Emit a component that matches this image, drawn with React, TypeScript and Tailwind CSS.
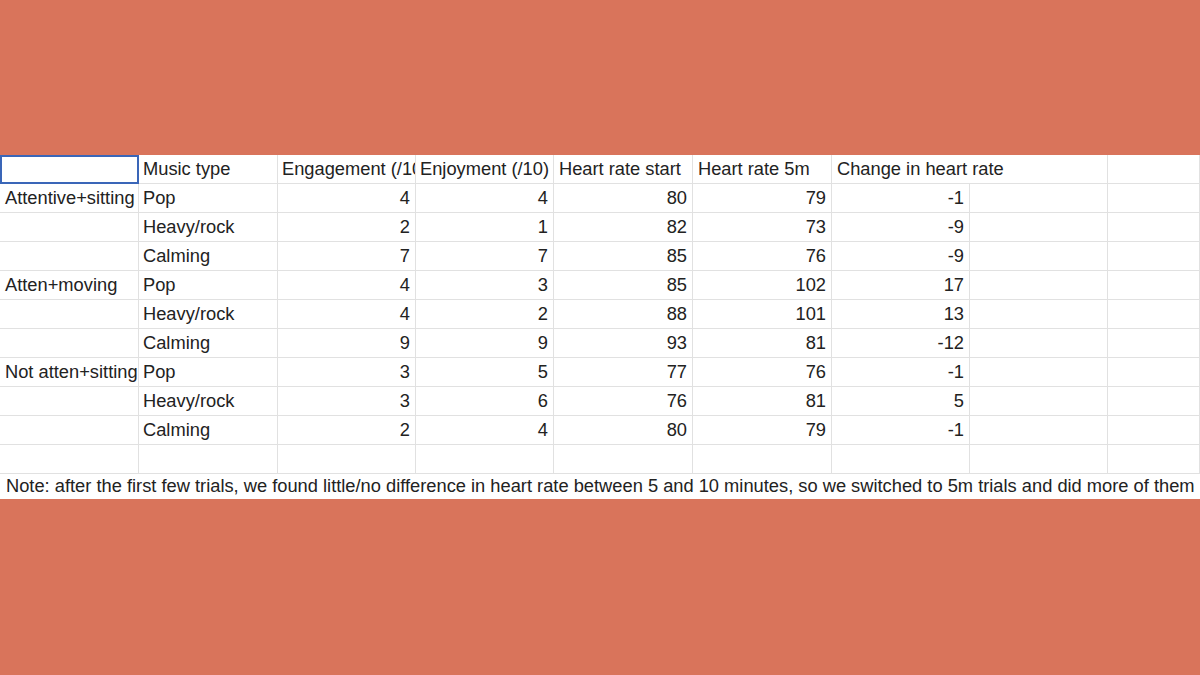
import { FC, ReactElement } from 'react';

type Row = [string, string, string, string, string, string, string];

const rows: Row[] = [
  ['Attentive+sitting', 'Pop', '4', '4', '80', '79', '-1'],
  ['', 'Heavy/rock', '2', '1', '82', '73', '-9'],
  ['', 'Calming', '7', '7', '85', '76', '-9'],
  ['Atten+moving', 'Pop', '4', '3', '85', '102', '17'],
  ['', 'Heavy/rock', '4', '2', '88', '101', '13'],
  ['', 'Calming', '9', '9', '93', '81', '-12'],
  ['Not atten+sitting', 'Pop', '3', '5', '77', '76', '-1'],
  ['', 'Heavy/rock', '3', '6', '76', '81', '5'],
  ['', 'Calming', '2', '4', '80', '79', '-1'],
  ['', '', '', '', '', '', '']
];

const cell = 'h-[29px] overflow-hidden whitespace-nowrap border-b border-r border-[#e1e1e1] leading-[28px]';

const App: FC = (): ReactElement => {
  return (
    <div
      className="flex h-[675px] w-[1200px] flex-col bg-[#d9745b] pt-[155px] text-[18.3px] text-[#222222]"
      style={{ fontFamily: '"Liberation Sans", Arial, sans-serif' }}
    >
      <div className="bg-white">
        <div className="grid grid-cols-[139px_139px_138px_138px_139px_139px_138px_138px_1fr]">
          {/* header */}
          <div className="h-[29px] border-2 border-[#3a66b8] bg-white" />
          <div className={`${cell} pl-[4px]`}>Music type</div>
          <div className={`${cell} pl-[4px]`}>Engagement (/10)</div>
          <div className={`${cell} pl-[4px]`}>Enjoyment (/10)</div>
          <div className={`${cell} pl-[5px]`}>Heart rate start</div>
          <div className={`${cell} pl-[5px]`}>Heart rate 5m</div>
          <div className={`${cell} col-span-2 pl-[5px]`}>Change in heart rate</div>
          <div className={cell} />

          {rows.map((row, i) => (
            <div key={i} className="contents">
              <div className={`${cell} pl-[5px]`}>{row[0]}</div>
              <div className={`${cell} pl-[4px]`}>{row[1]}</div>
              {row.slice(2).map((value, j) => (
                <div key={j} className={`${cell} pr-[5px] text-right`}>
                  {value}
                </div>
              ))}
              <div className={cell} />
              <div className={cell} />
            </div>
          ))}
        </div>
        <div className="h-[25px] whitespace-nowrap pl-[6px] leading-[24px]">
          Note: after the first few trials, we found little/no difference in heart rate between 5 and 10 minutes, so we
          switched to 5m trials and did more of them
        </div>
      </div>
    </div>
  );
};

export default App;
